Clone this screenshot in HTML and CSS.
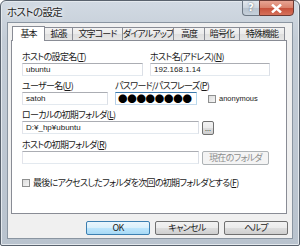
FILE: index.html
```html
<!DOCTYPE html>
<html lang="ja">
<head>
	<meta charset="UTF-8">
	<title>ホストの設定</title>
	<link rel="stylesheet" href="styles.css">
</head>
<body>
	<div class="window">
		<div class="titlebar">
			<span class="title">ホストの設定</span>
			<div class="caption">
				<span class="cap-help">?</span>
				<span class="cap-close">
					<svg width="11" height="9" viewBox="0 0 11 9"><path d="M1 0.5 L10 8.5 M10 0.5 L1 8.5" stroke="#fff" stroke-width="2.4"/></svg>
				</span>
			</div>
		</div>
		<div class="client">
			<div class="tabs">
				<span class="tab active">基本</span>
				<span class="tab">拡張</span>
				<span class="tab">文字コード</span>
				<span class="tab">ダイアルアップ</span>
				<span class="tab">高度</span>
				<span class="tab">暗号化</span>
				<span class="tab">特殊機能</span>
			</div>
			<div class="panel">
				<div class="row">
					<div class="field f-name">
						<label>ホストの設定名(<u>T</u>)</label>
						<div class="input">ubuntu</div>
					</div>
					<div class="field f-host">
						<label>ホスト名(アドレス)(<u>N</u>)</label>
						<div class="input">192.168.1.14</div>
					</div>
				</div>
				<div class="row">
					<div class="field f-user">
						<label>ユーザー名(<u>U</u>)</label>
						<div class="input">satoh</div>
					</div>
					<div class="field f-pass">
						<label>パスワード/パスフレーズ(<u>P</u>)</label>
						<div class="input focus dots">●●●●●●●●</div>
					</div>
					<div class="check anon"><span class="box"></span>anonymous</div>
				</div>
				<div class="row">
					<div class="field f-path">
						<label>ローカルの初期フォルダ(<u>L</u>)</label>
						<div class="line">
							<div class="input">D:¥_hp¥ubuntu</div>
							<span class="btn small">...</span>
						</div>
					</div>
				</div>
				<div class="row">
					<div class="field f-path">
						<label>ホストの初期フォルダ(<u>R</u>)</label>
						<div class="line">
							<div class="input"></div>
							<span class="btn current">現在のフォルダ</span>
						</div>
					</div>
				</div>
				<div class="check last"><span class="box"></span>最後にアクセスしたフォルダを次回の初期フォルダとする(<u>F</u>)</div>
			</div>
			<div class="buttons">
				<span class="btn big default">OK</span>
				<span class="btn big">キャンセル</span>
				<span class="btn big">ヘルプ</span>
			</div>
		</div>
	</div>
</body>
</html>
```

FILE: styles.css
```css
* {
	margin: 0;
	padding: 0;
	box-sizing: border-box;
}

body {
	width: 300px;
	height: 246px;
	font-family: "Noto Sans CJK JP", "Noto Sans", sans-serif;
	font-feature-settings: "palt";
	font-size: 9px;
	letter-spacing: -0.7px;
	color: #1a1a1a;
	background: #fff;
	overflow: hidden;
}

.window {
	width: 300px;
	height: 246px;
	padding: 0 6px 6px 6px;
	border: 1px solid #59626d;
	border-radius: 6px 6px 2px 2px;
	background: linear-gradient(to bottom, #d2dae3 0, #c3ccd6 40px, #b9c3ce 100%);
	box-shadow: inset 0 0 0 1px #e4e9ee;
}

.titlebar {
	height: 21px;
	display: flex;
	justify-content: space-between;
	align-items: flex-start;
}

.title {
	margin: 4px 0 0 0;
	font-size: 10.5px;
	letter-spacing: -0.6px;
	line-height: 14px;
	color: #1e1e1e;
	text-shadow: 0 0 6px #fff, 0 0 3px #fff;
}

.caption {
	display: flex;
	margin-top: -1px;
	margin-right: -1px;
}

.cap-help {
	width: 17px;
	height: 16px;
	border: 1px solid #6d7884;
	border-right: none;
	border-radius: 0 0 0 4px;
	background: linear-gradient(to bottom, #e3e8ee 0, #ccd5de 50%, #b9c4cf 51%, #c6d0db 100%);
	color: #fff;
	font-family: "DejaVu Sans", sans-serif;
	font-size: 10px;
	font-weight: bold;
	letter-spacing: 0;
	line-height: 14px;
	text-align: center;
	text-shadow: 0 0 2px #4c5866;
}

.cap-close {
	width: 35px;
	height: 16px;
	border: 1px solid #6d3a34;
	border-radius: 0 0 4px 0;
	background: linear-gradient(to bottom, #e8a493 0, #d9806a 50%, #c7503a 51%, #d5705a 100%);
	display: flex;
	align-items: center;
	justify-content: center;
}

.client {
	height: 217px;
	border: 1px solid #8a95a1;
	background: #f0f0f0;
	display: flex;
	flex-direction: column;
}

.tabs {
	height: 17px;
	display: flex;
	align-items: flex-end;
	padding-left: 6px;
	position: relative;
	z-index: 1;
}

.tab {
	height: 13px;
	margin-right: -1px;
	border: 1px solid #898c95;
	border-bottom: none;
	background: linear-gradient(to bottom, #f3f3f3 0, #ebebeb 50%, #dedede 51%, #e6e6e6 100%);
	letter-spacing: -0.9px;
	line-height: 12px;
	text-align: center;
	white-space: nowrap;
	overflow: hidden;
}

.tab:nth-child(2) { width: 29px; }
.tab:nth-child(3) { width: 51px; }
.tab:nth-child(4) { width: 52px; }
.tab:nth-child(5) { width: 32px; }
.tab:nth-child(6) { width: 36px; }
.tab:nth-child(7) { width: 46px; }

.tab.active {
	width: 33px;
	height: 15px;
	margin: 0 -1px 0 -2px;
	background: #fff;
	line-height: 13px;
	position: relative;
	top: 1px;
}

.panel {
	width: 276px;
	height: 174px;
	margin-left: 3px;
	border: 1px solid #898c95;
	background: #fff;
	padding: 10px 0 0 10px;
	display: flex;
	flex-direction: column;
}

.row {
	display: flex;
	align-items: flex-end;
	margin-bottom: 4px;
}

.field {
	display: flex;
	flex-direction: column;
	margin-right: 7px;
}

.field label {
	line-height: 12px;
	white-space: nowrap;
}

.input {
	height: 13px;
	border: 1px solid #abadb3;
	border-color: #abadb3 #dbdfe6 #e3e9ef #e2e3ea;
	background: #fff;
	padding-left: 3px;
	font-family: "Liberation Sans", sans-serif;
	font-size: 8px;
	letter-spacing: 0;
	line-height: 11px;
	white-space: nowrap;
	overflow: hidden;
}

.input.focus {
	border-color: #3d7bad #b7d9ed #c5daed #b5cfe7;
}

.input.dots {
	padding-left: 2px;
	font-family: "Noto Sans CJK JP", sans-serif;
	font-size: 9.5px;
	letter-spacing: -0.3px;
	line-height: 11px;
	color: #000;
}

.f-name { width: 121px; }
.f-host { width: 120px; }
.f-user { width: 86px; }
.f-pass { width: 82px; margin-right: 11px; }
.f-path { width: 247px; }

.line {
	display: flex;
	align-items: flex-start;
}

.line .input {
	width: 177px;
	margin-right: 3px;
}

.check {
	display: flex;
	align-items: center;
	white-space: nowrap;
}

.check .box {
	width: 8px;
	height: 8px;
	border: 1px solid #8e8f8f;
	background: linear-gradient(135deg, #dcdcdc 0, #f5f5f5 100%);
	margin-right: 3px;
}

.anon {
	font-family: "Liberation Sans", sans-serif;
	font-size: 7.5px;
	letter-spacing: 0;
	margin-bottom: 2px;
}

.last {
	margin-top: 8px;
	line-height: 12px;
}

.btn {
	display: inline-block;
	border: 1px solid #707070;
	border-radius: 2px;
	background: linear-gradient(to bottom, #f2f2f2 0, #ebebeb 50%, #dddddd 51%, #cfcfcf 100%);
	text-align: center;
	white-space: nowrap;
}

.btn.small {
	width: 12px;
	height: 14px;
	font-size: 7px;
	letter-spacing: 0;
	line-height: 12px;
	color: #333;
}

.btn.current {
	width: 67px;
	height: 14px;
	line-height: 12px;
	color: #8d8d8d;
	border-color: #adb2b5;
	background: #f4f4f4;
}

.buttons {
	display: flex;
	justify-content: flex-end;
	gap: 5px;
	padding: 7px 4px 0 0;
}

.btn.big {
	width: 64px;
	height: 14px;
	line-height: 12px;
}

.btn.default {
	border-color: #3c7fb1;
	background: linear-gradient(to bottom, #eaf6fd 0, #d9f0fc 50%, #bee6fd 51%, #a7d9f5 100%);
}
```
